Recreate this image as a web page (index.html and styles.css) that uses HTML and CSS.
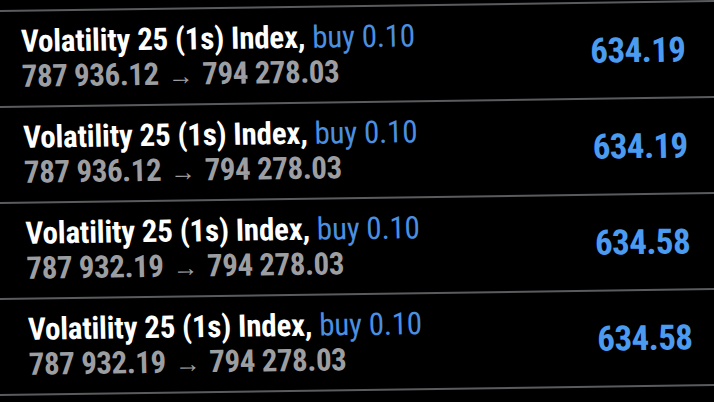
FILE: index.html
```html
<!DOCTYPE html>
<html>
<head>
<meta charset="utf-8">
<link rel="stylesheet" href="styles.css">
</head>
<body>
<div class="list">
  <div class="row">
    <div class="info">
      <div class="title">Volatility 25 (1s) Index, <span class="side">buy 0.10</span></div>
      <div class="prices">787 936.12<span class="arrow">→</span>794 278.03</div>
    </div>
    <div class="profit">634.19</div>
  </div>
  <div class="row">
    <div class="info">
      <div class="title">Volatility 25 (1s) Index, <span class="side">buy 0.10</span></div>
      <div class="prices">787 936.12<span class="arrow">→</span>794 278.03</div>
    </div>
    <div class="profit">634.19</div>
  </div>
  <div class="row">
    <div class="info">
      <div class="title">Volatility 25 (1s) Index, <span class="side">buy 0.10</span></div>
      <div class="prices">787 932.19<span class="arrow">→</span>794 278.03</div>
    </div>
    <div class="profit">634.58</div>
  </div>
  <div class="row">
    <div class="info">
      <div class="title">Volatility 25 (1s) Index, <span class="side">buy 0.10</span></div>
      <div class="prices">787 932.19<span class="arrow">→</span>794 278.03</div>
    </div>
    <div class="profit">634.58</div>
  </div>
</div>
</body>
</html>
```
FILE: styles.css
```css
html, body {
  margin: 0;
  padding: 0;
  background: #000;
  overflow: hidden;
}
body {
  width: 714px;
  height: 402px;
  font-family: Roboto, "Liberation Sans", sans-serif;
  font-stretch: condensed;
}
.list {
  margin-top: 5px;
  margin-left: -7px;
  width: 734px;
  transform: rotate(-0.8deg) skewX(0.6deg);
  transform-origin: 367px 200px;
  border-bottom: 2px solid #5a5b5e;
}
.row {
  display: flex;
  align-items: center;
  justify-content: space-between;
  height: 94px;
  border-top: 2px solid #5a5b5e;
  padding: 0 38px 0 32px;
  box-sizing: content-box;
}
.info {
  display: flex;
  flex-direction: column;
  margin-top: 1px;
}
.title {
  font-size: 31px;
  line-height: 36.5px;
  font-weight: 700;
  color: #fff;
  letter-spacing: -0.2px;
  white-space: nowrap;
}
.side {
  font-weight: 400;
  color: #4a8fe0;
}
.prices {
  font-size: 31px;
  line-height: 33px;
  font-weight: 700;
  color: #9c9ea2;
  letter-spacing: -0.45px;
  white-space: nowrap;
  display: flex;
  align-items: baseline;
}
.arrow {
  font-weight: 400;
  font-size: 26px;
  margin: 0 9px 0 9px;
}
.profit {
  font-size: 35px;
  font-weight: 700;
  color: #4b9bf0;
  letter-spacing: -0.6px;
}
```
